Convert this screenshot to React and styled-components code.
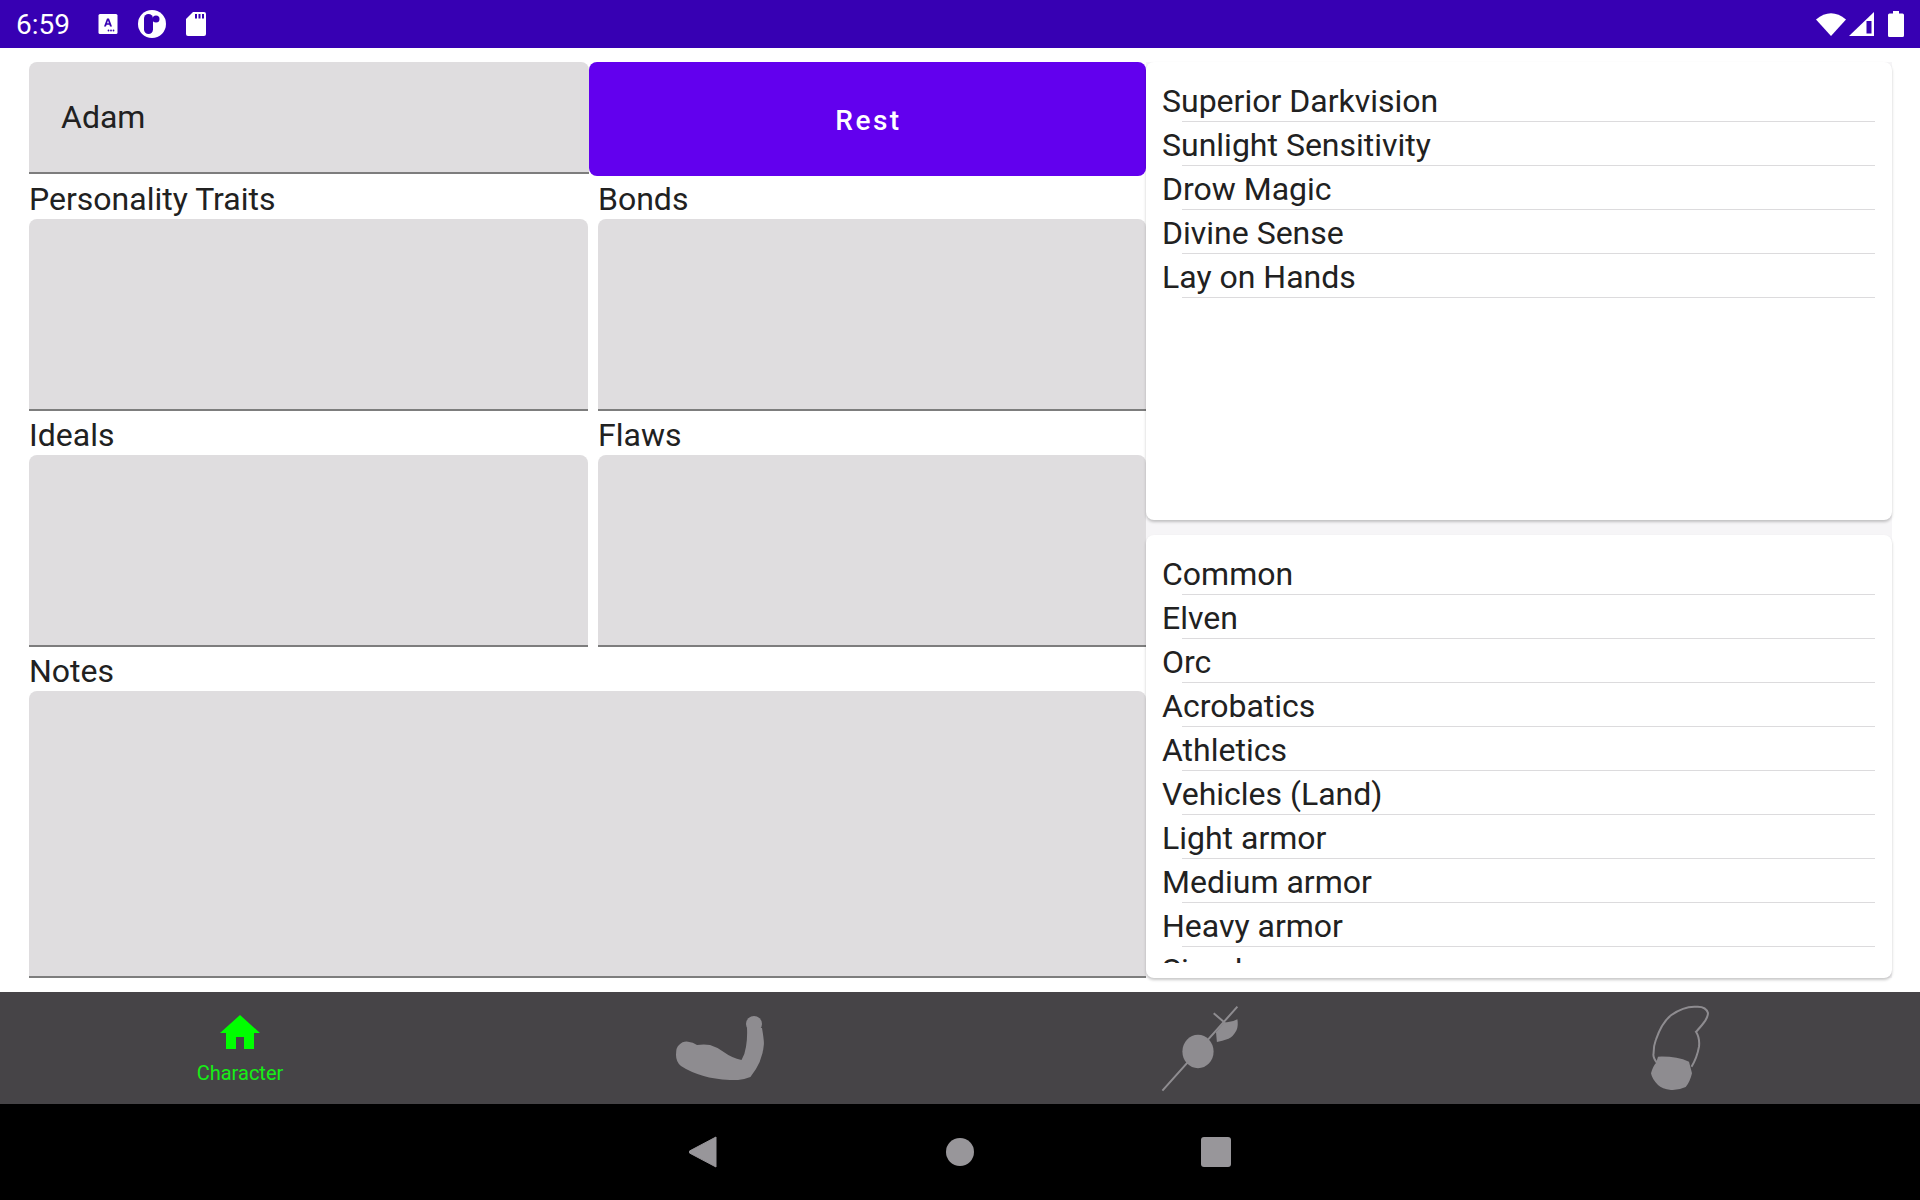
import React from "react";
import styled, { createGlobalStyle } from "styled-components";

const GlobalStyle = createGlobalStyle`
  html, body {
    margin: 0;
    padding: 0;
    background: #fff;
  }
  * {
    box-sizing: border-box;
  }
`;

const Screen = styled.div`
  width: 1920px;
  height: 1200px;
  display: flex;
  flex-direction: column;
  overflow: hidden;
  font-family: Roboto, "Liberation Sans", sans-serif;
  color: #212121;
  background: #fff;
`;

const StatusBar = styled.div`
  height: 48px;
  flex: none;
  display: flex;
  align-items: center;
  justify-content: space-between;
  padding: 0 16px;
  background: #3700b3;
  color: #fff;
`;

const StatusGroup = styled.div`
  display: flex;
  align-items: center;
  gap: ${(props) => props.$gap || 20}px;
`;

const Clock = styled.span`
  font-size: 28px;
  width: 62px;
`;

const BatterySpacer = styled.span`
  width: 8px;
`;

const Main = styled.div`
  flex: 1;
  min-height: 0;
  display: flex;
  padding: 14px 28px;
`;

const LeftColumn = styled.div`
  width: 1118px;
  flex: none;
  display: flex;
  flex-direction: column;
  padding-left: 1px;
`;

const TopRow = styled.div`
  display: flex;
  align-items: flex-start;
  height: 114px;
  flex: none;
`;

const NameField = styled.div`
  width: 560px;
  height: 112px;
  display: flex;
  align-items: center;
  padding: 0 32px 0;
  font-size: 32px;
  background: #dfdddf;
  border-bottom: 2px solid #7d7d7d;
  border-radius: 8px 8px 0 0;
`;

const RestButton = styled.button`
  flex: 1;
  height: 114px;
  padding: 2px 0 0 2px;
  border: 0;
  border-radius: 8px;
  background: #6200ee;
  color: #fff;
  font-family: inherit;
  font-size: 28px;
  font-weight: 500;
  letter-spacing: 2.5px;
`;

const FieldGrid = styled.div`
  display: grid;
  grid-template-columns: 559px 548px;
  column-gap: 10px;
`;

const Section = styled.div`
  display: flex;
  flex-direction: column;
`;

const FieldLabel = styled.div`
  height: ${(props) => (props.$first ? 43 : 44)}px;
  line-height: ${(props) => (props.$first ? 46 : 49)}px;
  font-size: 32px;
  white-space: nowrap;
`;

const TextArea = styled.div`
  height: ${(props) => props.$height || 192}px;
  background: #dfdddf;
  border-bottom: 2px solid #7d7d7d;
  border-radius: 8px 8px 0 0;
`;

const RightColumn = styled.div`
  width: 746px;
  flex: none;
  display: flex;
  flex-direction: column;
  gap: 15px;
  background: #f6f5f7;
`;

const Card = styled.div`
  height: ${(props) => props.$height}px;
  flex: none;
  padding: 18px 17px 15px 16px;
  background: #fff;
  border-radius: 8px;
  box-shadow: 0 2px 3px rgba(0, 0, 0, 0.22);
`;

const List = styled.div`
  height: 100%;
  overflow: hidden;
`;

const ListRow = styled.div`
  height: 44px;
  line-height: 43px;
  font-size: 32px;
  white-space: nowrap;
  position: relative;
  &::after {
    content: "";
    position: absolute;
    left: 20px;
    right: 0;
    bottom: 2px;
    height: 1px;
    background: #dcdbdd;
  }
`;

const BottomNav = styled.div`
  height: 112px;
  flex: none;
  display: grid;
  grid-template-columns: repeat(4, 1fr);
  background: #464447;
`;

const Tab = styled.div`
  display: flex;
  flex-direction: column;
  align-items: center;
  padding-top: ${(props) => props.$top || 0}px;
  color: ${(props) => (props.$active ? "#16ee16" : "#8e8c90")};
`;

const TabLabel = styled.span`
  font-size: 20px;
  line-height: 24px;
  margin-top: 4px;
`;

const SystemBar = styled.div`
  height: 96px;
  flex: none;
  display: flex;
  align-items: center;
  justify-content: center;
  gap: 227px;
  background: #000;
`;

const BackIcon = () => (
  <svg width="30" height="34" viewBox="0 0 30 34">
    <path d="M27 2 L0.5 16 Q0 17 0.5 18 L27 32 Z" fill="#98969a" stroke="#98969a" strokeWidth="1" strokeLinejoin="round" />
  </svg>
);

const HomeDot = styled.div`
  width: 28px;
  height: 28px;
  border-radius: 50%;
  background: #98969a;
`;

const RecentSquare = styled.div`
  width: 30px;
  height: 30px;
  border-radius: 3px;
  background: #98969a;
`;

const KeyboardIcon = () => (
  <svg width="20" height="20" viewBox="0 0 20 20">
    <rect x="0.5" y="0" width="19" height="20" rx="1.5" fill="#fff" />
    <path d="M6 12.5 L9 4.5 H11 L14 12.5 H12 L11.4 10.8 H8.6 L8 12.5 Z M9.1 9.2 H10.9 L10 6.6 Z" fill="#3700b3" fillRule="evenodd" />
    <circle cx="10.5" cy="16.5" r="0.9" fill="#3700b3" />
    <circle cx="13" cy="16.5" r="0.9" fill="#3700b3" />
    <circle cx="15.5" cy="16.5" r="0.9" fill="#3700b3" />
  </svg>
);

const PillIcon = () => (
  <svg width="28" height="28" viewBox="0 0 28 28">
    <circle cx="14" cy="14" r="14" fill="#fff" />
    <rect x="6" y="4" width="9" height="20" rx="4.5" fill="#3700b3" />
    <circle cx="18" cy="9" r="3.5" fill="#3700b3" />
  </svg>
);

const SdIcon = () => (
  <svg width="20" height="24" viewBox="0 0 20 24">
    <path d="M7 0 H18 A2 2 0 0 1 20 2 V22 A2 2 0 0 1 18 24 H2 A2 2 0 0 1 0 22 V7 Z" fill="#fff" />
    <rect x="9" y="2" width="2" height="4.5" fill="#3700b3" />
    <rect x="12.5" y="2" width="2" height="4.5" fill="#3700b3" />
    <rect x="16" y="2" width="2" height="4.5" fill="#3700b3" />
  </svg>
);

const WifiIcon = () => (
  <svg width="30" height="24" viewBox="0 0 30 24">
    <path d="M0 7.5 Q15 -5 30 7.5 L15 24 Z" fill="#fff" />
  </svg>
);

const SignalIcon = () => (
  <svg width="25" height="24" viewBox="0 0 25 24">
    <path d="M25 0 V24 H0 Z" fill="#fff" />
    <rect x="17.5" y="9" width="5" height="12.5" fill="#3700b3" />
  </svg>
);

const BatteryIcon = () => (
  <svg width="16" height="26" viewBox="0 0 16 26">
    <path d="M5 0 H11 V2.5 H14.5 A1.5 1.5 0 0 1 16 4 V24.5 A1.5 1.5 0 0 1 14.5 26 H1.5 A1.5 1.5 0 0 1 0 24.5 V4 A1.5 1.5 0 0 1 1.5 2.5 H5 Z" fill="#fff" />
  </svg>
);

const HomeIcon = () => (
  <svg width="48" height="48" viewBox="0 0 24 24">
    <path d="M10 20v-6h4v6h5v-8h3L12 3 2 12h3v8z" fill="#00ff00" />
  </svg>
);

const ArmIcon = () => (
  <svg width="88" height="64" viewBox="0 0 88 64">
    <circle cx="78" cy="8" r="8" fill="#8e8c90" />
    <path
      d="M71 12 L86 12 Q88.4 26 87.8 29 Q86.5 46 74.4 61 Q64 65 54 64 Q38 63 27.6 60 Q14 56 5 50 Q0 46 0 39 Q0 31 3 29 Q7 25 12 25.7 Q17 26 21 29 Q28 28 34 29 Q41 31 47.7 36 Q56 42 65.5 44 Q69 38 70 30.7 Q71.5 22 71 12 Z"
      fill="#8e8c90"
    />
  </svg>
);

const WeaponIcon = () => (
  <svg width="82" height="90" viewBox="0 0 82 90">
    <path d="M3.4 86.7 L78.4 2.7 M54.7 9.3 L65 18" stroke="#8e8c90" strokeWidth="2" fill="none" />
    <ellipse cx="39" cy="47.5" rx="15.6" ry="16.7" fill="#8e8c90" />
    <path d="M65 18 Q72 19 78.4 15.3 Q79.5 22 77.5 26.3 Q74 33 69.5 34.7 Q63 37 57.9 38 L57 28 L63 21 Z" fill="#8e8c90" />
  </svg>
);

const GloveIcon = () => (
  <svg width="60" height="88" viewBox="0 0 60 88">
    <path
      d="M7 59 Q2.5 53 3.6 49.3 Q3.5 42 5.8 36 Q12 18 21.4 11 Q34 2 46 2.7 Q56 2 58 9 Q58 14 52 21 Q47 27 46 27.7 Q50 34 49 42.7 Q47 54 41.5 62.7"
      stroke="#8e8c90"
      strokeWidth="2"
      fill="none"
    />
    <path d="M8 52.7 Q26 52 39 57.7 L42 69.3 Q40 78 35.7 83 Q28 86.5 21 86 Q12 85 8 81 Q2 75 1 69.3 Q3 62 6 59 Z" fill="#8e8c90" />
  </svg>
);

const traits = ["Superior Darkvision", "Sunlight Sensitivity", "Drow Magic", "Divine Sense", "Lay on Hands"];
const proficiencies = [
  "Common",
  "Elven",
  "Orc",
  "Acrobatics",
  "Athletics",
  "Vehicles (Land)",
  "Light armor",
  "Medium armor",
  "Heavy armor",
  "Simple weapons",
];

export default function App() {
  return (
    <Screen>
      <GlobalStyle />
      <StatusBar>
        <StatusGroup>
          <Clock>6:59</Clock>
          <KeyboardIcon />
          <PillIcon />
          <SdIcon />
        </StatusGroup>
        <StatusGroup $gap={3}>
          <WifiIcon />
          <SignalIcon />
          <BatterySpacer />
          <BatteryIcon />
        </StatusGroup>
      </StatusBar>

      <Main>
        <LeftColumn>
          <TopRow>
            <NameField>Adam</NameField>
            <RestButton>Rest</RestButton>
          </TopRow>
          <FieldGrid>
            <Section>
              <FieldLabel $first>Personality Traits</FieldLabel>
              <TextArea />
            </Section>
            <Section>
              <FieldLabel $first>Bonds</FieldLabel>
              <TextArea />
            </Section>
            <Section>
              <FieldLabel>Ideals</FieldLabel>
              <TextArea />
            </Section>
            <Section>
              <FieldLabel>Flaws</FieldLabel>
              <TextArea />
            </Section>
          </FieldGrid>
          <Section>
            <FieldLabel>Notes</FieldLabel>
            <TextArea $height={287} />
          </Section>
        </LeftColumn>

        <RightColumn>
          <Card $height={458}>
            <List>
              {traits.map((item) => (
                <ListRow key={item}>{item}</ListRow>
              ))}
            </List>
          </Card>
          <Card $height={443}>
            <List>
              {proficiencies.map((item) => (
                <ListRow key={item}>{item}</ListRow>
              ))}
            </List>
          </Card>
        </RightColumn>
      </Main>

      <BottomNav>
        <Tab $active $top={17}>
          <HomeIcon />
          <TabLabel>Character</TabLabel>
        </Tab>
        <Tab $top={24}>
          <ArmIcon />
        </Tab>
        <Tab $top={12}>
          <WeaponIcon />
        </Tab>
        <Tab $top={12}>
          <GloveIcon />
        </Tab>
      </BottomNav>

      <SystemBar>
        <BackIcon />
        <HomeDot />
        <RecentSquare />
      </SystemBar>
    </Screen>
  );
}
